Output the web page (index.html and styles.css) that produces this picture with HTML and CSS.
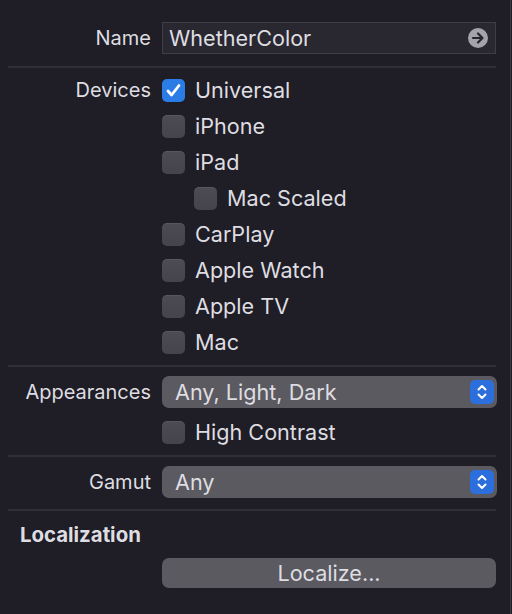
FILE: index.html
```html
<!DOCTYPE html>
<html>
<head>
<meta charset="utf-8">
<link rel="stylesheet" href="styles.css">
</head>
<body>
<div class="panel">
  <div class="row name-row">
    <div class="label">Name</div>
    <div class="field">
      <span class="field-text">WhetherColor</span>
      <svg class="go" width="20" height="20" viewBox="0 0 20 20"><circle cx="10" cy="10" r="10" fill="#a4a3a9"/><path d="M5 10h9M10 5.5l4.5 4.5L10 14.5" fill="none" stroke="#26242c" stroke-width="2.2" stroke-linecap="round" stroke-linejoin="round"/></svg>
    </div>
  </div>
  <div class="sep sep-1"></div>
  <div class="row devices">
    <div class="label top">Devices</div>
    <div class="checks">
      <div class="check"><span class="box on"><svg width="23" height="23" viewBox="0 0 23 23"><path d="M6 12l3.6 4L17 6.5" fill="none" stroke="#fff" stroke-width="2.8" stroke-linecap="round" stroke-linejoin="round"/></svg></span><span class="text">Universal</span></div>
      <div class="check"><span class="box"></span><span class="text">iPhone</span></div>
      <div class="check"><span class="box"></span><span class="text">iPad</span></div>
      <div class="check indent"><span class="box"></span><span class="text">Mac Scaled</span></div>
      <div class="check"><span class="box"></span><span class="text">CarPlay</span></div>
      <div class="check"><span class="box"></span><span class="text">Apple Watch</span></div>
      <div class="check"><span class="box"></span><span class="text">Apple TV</span></div>
      <div class="check"><span class="box"></span><span class="text">Mac</span></div>
    </div>
  </div>
  <div class="sep sep-2"></div>
  <div class="row popup-row appear">
    <div class="label">Appearances</div>
    <div class="popup">
      <span class="text">Any, Light, Dark</span>
      <span class="stepper"><svg width="24" height="24" viewBox="0 0 24 24"><path d="M8.5 9.5L12 6l3.5 3.5M8.5 14.5L12 18l3.5-3.5" fill="none" stroke="#fff" stroke-width="2" stroke-linecap="round" stroke-linejoin="round"/></svg></span>
    </div>
  </div>
  <div class="row contrast">
    <div class="label"></div>
    <div class="check"><span class="box"></span><span class="text">High Contrast</span></div>
  </div>
  <div class="sep sep-3"></div>
  <div class="row popup-row gamut">
    <div class="label">Gamut</div>
    <div class="popup">
      <span class="text">Any</span>
      <span class="stepper"><svg width="24" height="24" viewBox="0 0 24 24"><path d="M8.5 9.5L12 6l3.5 3.5M8.5 14.5L12 18l3.5-3.5" fill="none" stroke="#fff" stroke-width="2" stroke-linecap="round" stroke-linejoin="round"/></svg></span>
    </div>
  </div>
  <div class="sep sep-4"></div>
  <div class="heading">Localization</div>
  <div class="row">
    <div class="label"></div>
    <div class="button">Localize...</div>
  </div>
</div>
</body>
</html>
```

FILE: styles.css
```css
html, body {
  margin: 0;
  padding: 0;
  background: #1f1d25;
}
body {
  width: 512px;
  height: 614px;
  overflow: hidden;
  font-family: Inter, "Noto Sans", sans-serif;
  font-size: 20px;
  color: #dedde2;
}
.panel {
  box-sizing: border-box;
  width: 511px;
  height: 614px;
  border-right: 1px solid #3a3940;
  padding: 22px 0 0 8px;
}
.row {
  display: grid;
  grid-template-columns: 143px 334px;
  column-gap: 11px;
  align-items: center;
}
.label {
  text-align: right;
  line-height: 32px;
}
.label.top {
  align-self: start;
  line-height: 36px;
}
.field {
  box-sizing: border-box;
  height: 32px;
  background: #29272f;
  border: 1px solid #3f3d45;
  display: flex;
  align-items: center;
  justify-content: space-between;
  padding: 0 7px 0 6px;
}
.field-text,
.text,
.button {
  font-size: 21.6px;
}
.field-text {
  line-height: 30px;
}
.go { display: block; }
.sep {
  width: 488px;
  height: 2px;
  background: #302e36;
}
.sep-1 { margin-top: 12px; margin-bottom: 4px; }
.sep-2 { margin-top: 5px; margin-bottom: 9px; }
.sep-3 { margin-top: 5px; margin-bottom: 9px; }
.sep-4 { margin-top: 11px; }
.checks {
  display: flex;
  flex-direction: column;
}
.check {
  display: flex;
  align-items: center;
  gap: 10px;
  height: 36px;
}
.check.indent { padding-left: 32px; }
.box {
  box-sizing: border-box;
  width: 23px;
  height: 23px;
  border-radius: 5px;
  background: linear-gradient(#4d4b52, #46444b);
  border-top: 1px solid #59575e;
  flex: none;
}
.box.on {
  background: #2c7ce6;
  border-top: none;
}
.box svg { display: block; }
.popup {
  box-sizing: border-box;
  height: 32px;
  width: 335px;
  border-radius: 7px;
  background: #5b5a60;
  display: flex;
  align-items: center;
  justify-content: space-between;
  padding: 0 3px 0 13px;
}
.stepper {
  width: 24px;
  height: 24px;
  border-radius: 5px;
  background: #2c6fdc;
}
.stepper svg { display: block; }
.contrast { margin-top: 6px; }
.heading {
  font-weight: bold;
  font-size: 20.4px;
  padding-left: 12px;
  margin-top: 10px;
  line-height: 28px;
}
.button {
  margin-top: 9px;
  height: 30px;
  border-radius: 7px;
  background: #5b5a60;
  text-align: center;
  line-height: 30px;
}
```
